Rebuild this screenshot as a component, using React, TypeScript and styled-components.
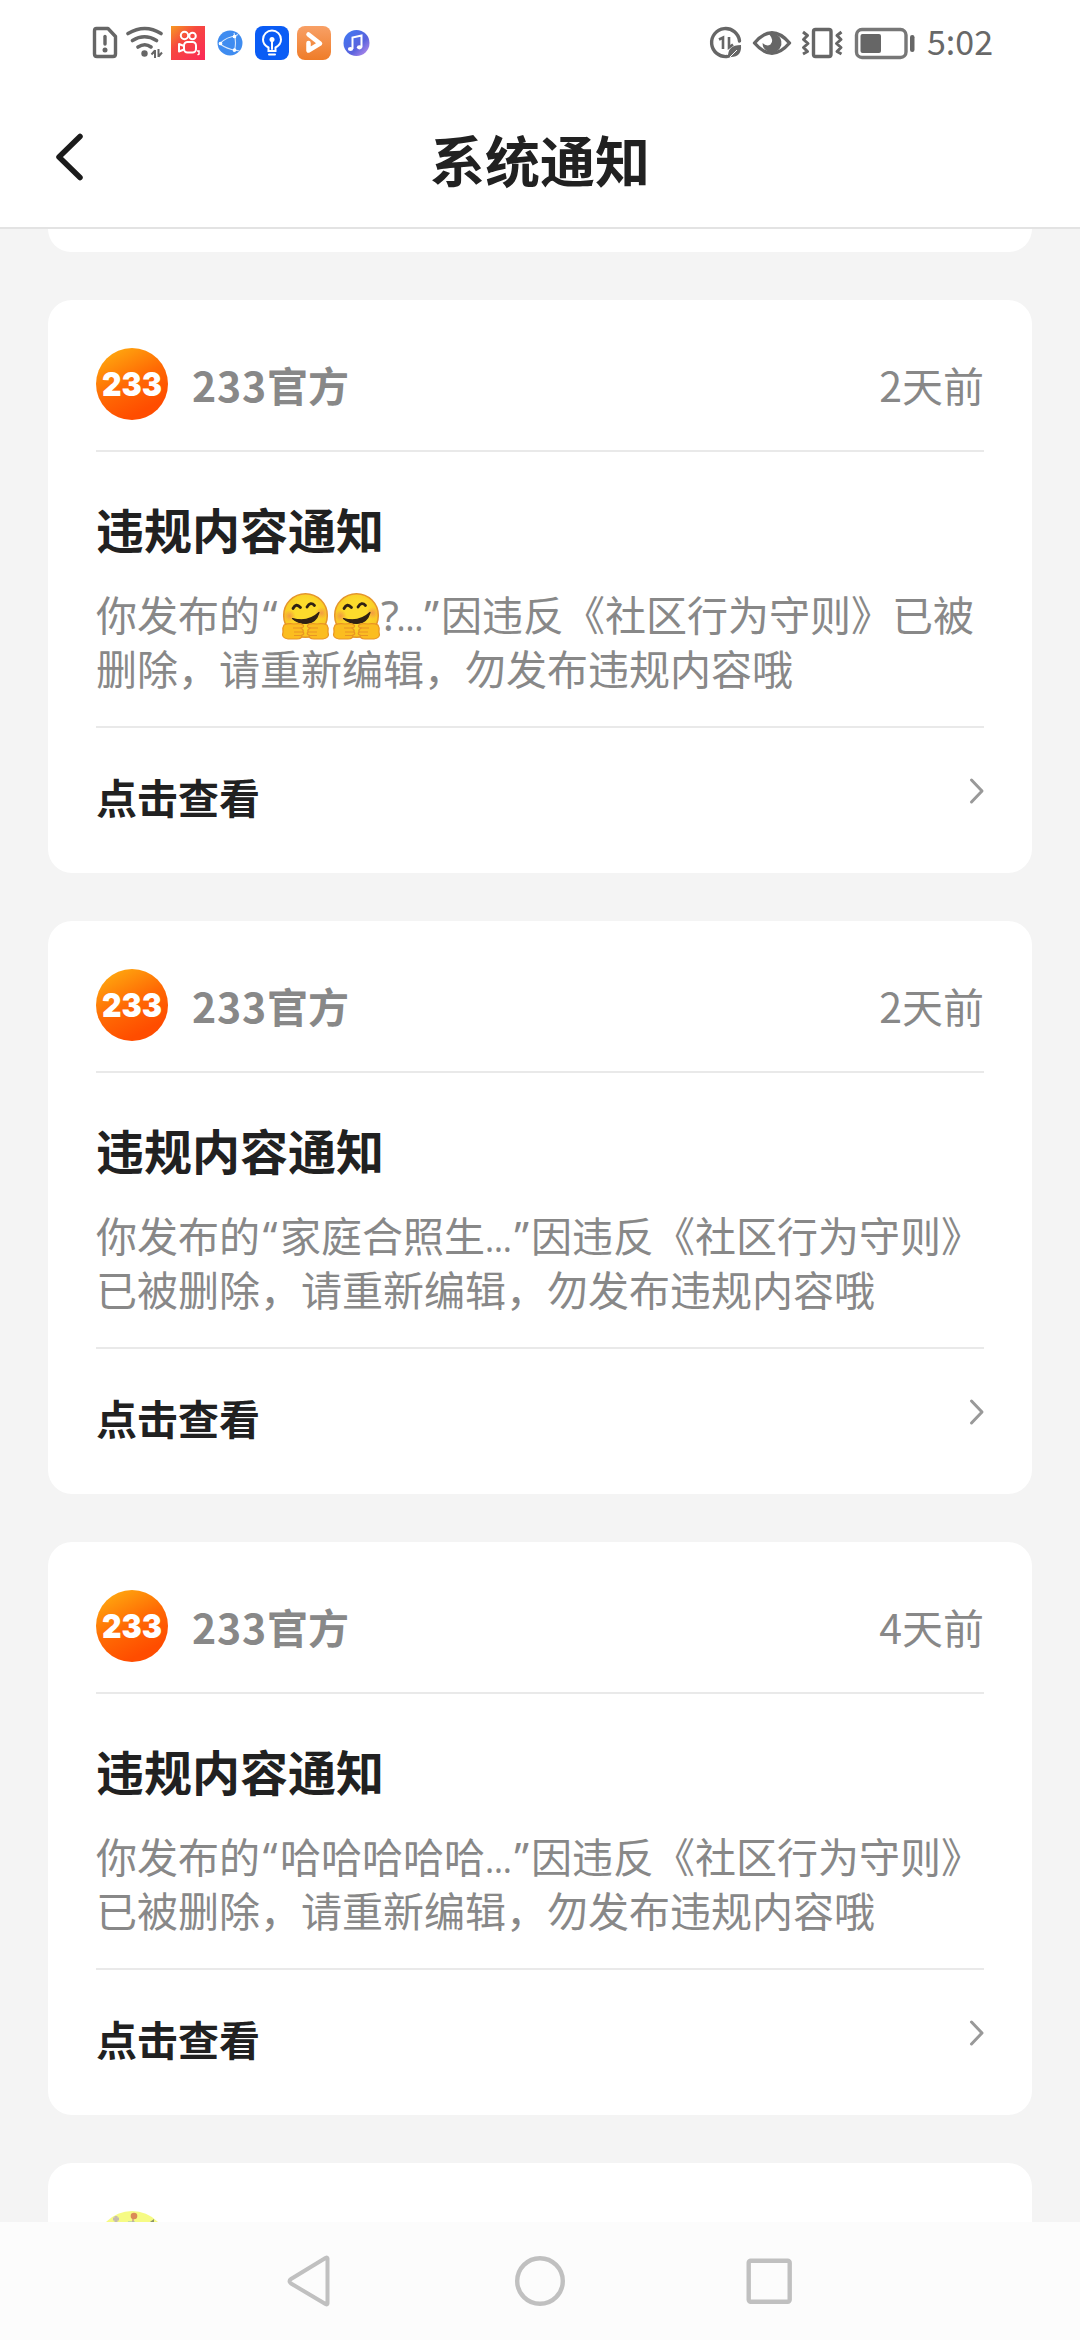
import React from 'react';
import styled, { createGlobalStyle } from 'styled-components';

const GlobalStyle = createGlobalStyle`
  * { box-sizing: border-box; }
  body { margin: 0; background: #f4f4f4; }
`;

const Screen = styled.div`
  width: 1080px;
  height: 2340px;
  display: flex;
  flex-direction: column;
  overflow: hidden;
  background: #f4f4f4;
  color: #212121;
  font-family: 'Noto Sans CJK SC', 'Noto Sans', sans-serif;
`;

const StatusBar = styled.div`
  height: 86px;
  flex: none;
  padding: 0 88px 0 92px;
  display: flex;
  align-items: center;
  justify-content: space-between;
  background: #fff;
`;

const StatusArt = styled.svg`
  display: block;
  flex: none;
`;

const StatusRight = styled.div`
  display: flex;
  align-items: center;
`;

const Clock = styled.span`
  width: 65px;
  margin: 0 0 4px 12px;
  font-size: 34px;
  line-height: 50px;
  color: #686868;
  white-space: nowrap;
`;

const Header = styled.header`
  height: 143px;
  flex: none;
  display: grid;
  grid-template-columns: 200px 1fr 200px;
  align-items: center;
  border-bottom: 2px solid #e3e3e3;
  background: #fff;
`;

const BackButton = styled.button`
  width: 60px;
  height: 60px;
  margin: 0 0 0 40px;
  padding: 0;
  border: 0;
  background: none;
`;

const HeaderTitle = styled.h1`
  margin: 2px 0 0;
  text-align: center;
  font-size: 55px;
  line-height: 70px;
  font-weight: 700;
`;

const Feed = styled.main`
  flex: 1;
  min-height: 0;
  overflow: hidden;
  padding: 0 48px;
  display: flex;
  flex-direction: column;
  gap: 48px;
`;

const PreviousCard = styled.div`
  flex: none;
  height: 23px;
  border-radius: 0 0 24px 24px;
  background: #fff;
`;

const Card = styled.article`
  flex: none;
  height: 573px;
  padding: 0 48px;
  border-radius: 24px;
  background: #fff;
`;

const CardHead = styled.div`
  height: 152px;
  padding-top: 48px;
  display: flex;
  align-items: flex-start;
  border-bottom: 2px solid #e9e9e9;
`;

const Sender = styled.span`
  margin: 6px 0 0 24px;
  font-size: 41px;
  line-height: 60px;
  font-weight: 700;
  color: #888;
`;

const Digits = styled.span`
  letter-spacing: 0.8px;
`;

const Time = styled.time`
  margin: 6px 0 0 auto;
  font-size: 41px;
  line-height: 60px;
  color: #888;
`;

const CardBody = styled.div`
  height: 276px;
  padding-top: 41px;
  border-bottom: 2px solid #e9e9e9;
`;

const CardTitle = styled.h2`
  margin: 0;
  font-size: 48px;
  line-height: 70px;
  font-weight: 700;
`;

const Message = styled.p`
  margin: 23px 0 0;
  font-size: 41px;
  line-height: 55px;
  color: #888;
`;

const Line = styled.span`
  height: 54px;
  display: flex;
  align-items: baseline;
  white-space: nowrap;
`;

const Mark = styled.span<{ $width: number; $size?: number }>`
  width: ${(p) => p.$width}px;
  flex: none;
  display: flex;
  justify-content: center;
  font-family: 'Noto Sans', sans-serif;
  font-size: ${(p) => p.$size ?? 41}px;
`;

const CardFoot = styled.div`
  padding-top: 38px;
  display: flex;
  justify-content: space-between;
  align-items: flex-start;
`;

const FootLabel = styled.span`
  font-size: 41px;
  line-height: 60px;
  font-weight: 700;
`;

const FootArrow = styled.svg`
  margin: 10px -2px 0 0;
`;

const EmojiArt = styled.svg`
  flex: none;
  align-self: flex-start;
  width: 51px;
  height: 55px;
  margin-top: 3px;
`;

const LogoText = styled.text`
  font-family: Inter, sans-serif;
  font-size: 33px;
  font-weight: 900;
  fill: #fff;
`;

const NavBar = styled.nav`
  height: 118px;
  flex: none;
  display: flex;
  justify-content: center;
  align-items: center;
  gap: 170px;
  background: #fcfcfc;
`;

const Avatar = ({ id }: { id: string }) => (
  <svg width="72" height="72" viewBox="0 0 72 72">
    <defs>
      <linearGradient id={id} x1="0.15" y1="0.05" x2="0.6" y2="0.9">
        <stop offset="0" stopColor="#ffa80f" />
        <stop offset="0.55" stopColor="#ff6a04" />
        <stop offset="1" stopColor="#ff4d00" />
      </linearGradient>
    </defs>
    <circle cx="36" cy="36" r="36" fill={`url(#${id})`} />
    <LogoText x="6" y="48" textLength="60" lengthAdjust="spacingAndGlyphs">233</LogoText>
  </svg>
);

const PartyAvatar = () => (
  <svg width="72" height="72" viewBox="0 0 72 72">
    <circle cx="36" cy="36" r="36" fill="#f6fb84" />
    <path d="M37 5v7" stroke="#d9b08a" strokeWidth="2" />
    <circle cx="38" cy="5" r="3.300" fill="#db8a58" />
    <path d="M17 8h6M20 5v6" stroke="#c6bbae" strokeWidth="3" />
    <path d="M32 11.500h7" stroke="#9dc3b4" strokeWidth="2" />
    <path d="M54 11l4-3v4z" fill="#8b9566" />
  </svg>
);

const Hug = () => (
  <EmojiArt viewBox="0 0 51 55" role="img" aria-label="🤗">
    <defs>
      <radialGradient id="hugFace" cx="0.5" cy="0.4" r="0.6">
        <stop offset="0.4" stopColor="#fddb2c" />
        <stop offset="1" stopColor="#f8c321" />
      </radialGradient>
      <radialGradient id="hugCheek">
        <stop offset="0" stopColor="#f08a4b" stopOpacity="0.75" />
        <stop offset="1" stopColor="#f08a4b" stopOpacity="0" />
      </radialGradient>
    </defs>
    <circle cx="25.500" cy="26.500" r="21.800" fill="url(#hugFace)" stroke="#e5962c" strokeWidth="1.500" />
    <circle cx="9.500" cy="27" r="6" fill="url(#hugCheek)" />
    <circle cx="41.500" cy="24" r="6" fill="url(#hugCheek)" />
    <path d="M13 19.500q3-6 7.500-1M27 18q3.500-6 7.500-1.500" fill="none" stroke="#302114" strokeWidth="2.800" strokeLinecap="round" />
    <path d="M12.500 29.500Q28 34 39 23.500 36 34 26 34.500 18 34.500 12.500 29.500Z" fill="#302114" stroke="#302114" strokeWidth="1.200" strokeLinejoin="round" />
    <path d="M4 36q4-2 10-1 7-1 9 1 2 2-2 3 3 2 2 4 2 2-1 3 0 4-5 4H8Q1 49 3 43q-1-4 1-7Z" fill="#fbbd20" stroke="#e99424" strokeWidth="1.200" />
    <path d="M47 36q-4-2-10-1-7-1-9 1-2 2 2 3-3 2-2 4-2 2 1 3 0 4 5 4h9q7-1 5-7 1-4-1-7Z" fill="#fbbd20" stroke="#e99424" strokeWidth="1.200" />
    <path d="M13 39h9M14 43h9M14 46.500h8M38 39h-9M37 43h-9M37 46.500h-8" stroke="#e99424" strokeWidth="1.100" />
  </EmojiArt>
);

const StatusLeftIcons = () => (
  <StatusArt width="280" height="40" viewBox="92 23 280 40">
    <defs>
      <linearGradient id="cam" x1="0" y1="0" x2="0.9" y2="1">
        <stop offset="0" stopColor="#f79a22" />
        <stop offset="0.4" stopColor="#f6493f" />
        <stop offset="1" stopColor="#fb2a57" />
      </linearGradient>
      <linearGradient id="vid" x1="0" y1="0" x2="0" y2="1">
        <stop offset="0" stopColor="#f8a066" />
        <stop offset="1" stopColor="#ef7c28" />
      </linearGradient>
      <linearGradient id="mus" x1="0" y1="0" x2="1" y2="1">
        <stop offset="0" stopColor="#3d7af5" />
        <stop offset="0.6" stopColor="#5a63dd" />
        <stop offset="1" stopColor="#c993ef" />
      </linearGradient>
    </defs>
    <g fill="none" stroke="#666" strokeWidth="3.400" strokeLinejoin="round" strokeLinecap="round">
      <path d="M96.500 28.500H108l7.500 8V54q0 2.500-2.500 2.500H97Q94.500 56.500 94.500 54V31q0-2.500 2-2.500Z" />
      <path d="M105 36.500v7.500" />
      <path d="M128 33.500q17-10 33 0M132.500 40.500q12-7.500 24 0M138 47q7-4.500 13 0" strokeWidth="3.600" />
    </g>
    <circle cx="105" cy="50" r="2.500" fill="#666" />
    <circle cx="144.500" cy="53.500" r="3.200" fill="#666" />
    <path d="M155 50v8M151.500 54.500l3.500-4M158.500 49v8M162 52.500l-3.500 4" stroke="#666" strokeWidth="2" fill="none" />
    <rect x="171" y="26" width="34" height="34" fill="url(#cam)" />
    <g fill="none" stroke="#fff" strokeWidth="2">
      <circle cx="184.500" cy="35.500" r="3.700" />
      <circle cx="192.500" cy="36" r="3.300" />
      <rect x="184" y="42" width="12" height="10.500" rx="3.500" />
      <path d="M184 46l-5-2v7.500l5-2" strokeLinejoin="round" />
    </g>
    <path d="M197 51h2v3l-1.500 1" stroke="#fff" strokeWidth="1.500" fill="none" />
    <circle cx="230" cy="43" r="12.500" fill="#3f8cf0" />
    <g stroke="#fff" strokeWidth="1.100" fill="#fff">
      <path d="M220 43.500Q227 36.500 236 36M220 44Q227 49 236 50.500M234 33Q237 43 234 52M234 36.500l4-2M234.500 50l5 1" fill="none" strokeOpacity="0.8" />
      <circle cx="220.500" cy="43.500" r="1.300" />
      <circle cx="234.500" cy="36.500" r="1.300" />
      <circle cx="234.500" cy="50" r="1.300" />
    </g>
    <rect x="255" y="26" width="34" height="34" rx="8" fill="#0a5cf5" />
    <g fill="none" stroke="#fff" strokeWidth="2" strokeLinecap="round">
      <path d="M268.500 51v-3.500q-5.500-3-5.500-8a9 9 0 0 1 18 0q0 5-5.500 8V51Z" />
      <path d="M272 49v-8M269 54.500h6" strokeWidth="2" />
    </g>
    <circle cx="272" cy="39.500" r="2.500" fill="#fff" />
    <rect x="297" y="26" width="34" height="34" rx="8" fill="url(#vid)" />
    <path d="M308.500 34.500L320 43.500L308.500 50.500V43" fill="none" stroke="#fff" strokeWidth="4.500" strokeLinecap="round" strokeLinejoin="round" />
    <circle cx="356.500" cy="43" r="13" fill="url(#mus)" />
    <path d="M352.500 49V37.500l9-2V47" fill="none" stroke="#fff" strokeWidth="2" />
    <ellipse cx="350.500" cy="49" rx="2.600" ry="2.100" fill="#fff" />
    <ellipse cx="359.500" cy="47.300" rx="2.600" ry="2.100" fill="#fff" />
  </StatusArt>
);

const StatusRightIcons = () => (
  <StatusArt width="207" height="40" viewBox="707 22 207 40">
    <g fill="none" stroke="#666" strokeWidth="3.400">
      <path d="M726 55.500A14 14 0 1 1 738.500 40" strokeLinecap="round" />
      <path d="M718 38.500l4-2V48M728 36v10.500l4-3" strokeWidth="2.600" />
      <path d="M753.500 42Q771 21.500 788.500 42 771 62.500 753.500 42Z" strokeLinejoin="round" />
      <rect x="812.500" y="28.500" width="17.500" height="27" rx="2" />
      <path d="M802 31l4.500 3.500-4 4 4.500 4-4.500 4 4 4-4.500 2.500M840.500 31l-4.500 3.500 4 4-4.500 4 4.500 4-4 4 4.500 2.500" strokeWidth="3" strokeLinejoin="round" />
      <rect x="855.500" y="28.500" width="49.500" height="28" rx="5.500" stroke="#777" />
    </g>
    <path d="M727 57q-1-13 13-13 1 12-10 12Z" fill="#666" />
    <path d="M729 56l7-7" stroke="#fff" strokeWidth="1" />
    <path d="M768 33a9.500 9.500 0 1 1-6.500 9q4 4 8 1.500 4-4-1.500-10.500Z" fill="#666" />
    <rect x="859.500" y="33" width="20.500" height="19" rx="2" fill="#666" />
    <rect x="909" y="34" width="4.500" height="17" rx="2.200" fill="#666" />
  </StatusArt>
);

type Notice = { time: string; quote: string | null; head: string; second: string };

const notices: Notice[] = [
  { time: '2天前', quote: null, head: '因违反《社区行为守则》已被', second: '删除，请重新编辑，勿发布违规内容哦' },
  { time: '2天前', quote: '家庭合照生', head: '因违反《社区行为守则》', second: '已被删除，请重新编辑，勿发布违规内容哦' },
  { time: '4天前', quote: '哈哈哈哈哈', head: '因违反《社区行为守则》', second: '已被删除，请重新编辑，勿发布违规内容哦' },
];

const NoticeCard = ({ notice, index }: { notice: Notice; index: number }) => (
  <Card>
    <CardHead>
      <Avatar id={`avatar${index}`} />
      <Sender><Digits>233</Digits>官方</Sender>
      <Time>{notice.time}</Time>
    </CardHead>
    <CardBody>
      <CardTitle>违规内容通知</CardTitle>
      <Message>
        <Line>
          <span>你发布的</span>
          <Mark $width={20}>“</Mark>
          {notice.quote ? <span>{notice.quote}</span> : <><Hug /><Hug /><Mark $width={16}>?</Mark></>}
          <Mark $width={notice.quote ? 27 : 24} $size={34}>…</Mark>
          <Mark $width={19}>”</Mark>
          <span>{notice.head}</span>
        </Line>
        <Line>{notice.second}</Line>
      </Message>
    </CardBody>
    <CardFoot>
      <FootLabel>点击查看</FootLabel>
      <FootArrow width="18" height="30" viewBox="0 0 18 30">
        <path d="M3.500 4L14 15 3.500 26" fill="none" stroke="#999" strokeWidth="3" strokeLinecap="round" strokeLinejoin="round" />
      </FootArrow>
    </CardFoot>
  </Card>
);

export default function App() {
  return (
    <Screen>
      <GlobalStyle />
      <StatusBar>
        <StatusLeftIcons />
        <StatusRight>
          <StatusRightIcons />
          <Clock>5:02</Clock>
        </StatusRight>
      </StatusBar>
      <Header>
        <BackButton aria-label="返回">
          <svg width="60" height="60" viewBox="0 0 60 60">
            <path d="M40 9.500L19 30l21 20.500" fill="none" stroke="#1b1b1b" strokeWidth="5.500" strokeLinecap="round" strokeLinejoin="round" />
          </svg>
        </BackButton>
        <HeaderTitle>系统通知</HeaderTitle>
      </Header>
      <Feed>
        <PreviousCard />
        {notices.map((notice, i) => <NoticeCard key={i} notice={notice} index={i} />)}
        <Card>
          <CardHead><PartyAvatar /></CardHead>
        </Card>
      </Feed>
      <NavBar>
        <svg width="60" height="60" viewBox="0 0 60 60">
          <path d="M47.500 7.500V52.500Q47.500 54 45.500 53L11 32.500Q8 30 11 28L45.500 7Q47.500 6 47.500 7.500Z" fill="none" stroke="#c0c0c0" strokeWidth="4" strokeLinejoin="round" />
        </svg>
        <svg width="60" height="60" viewBox="0 0 60 60">
          <circle cx="30" cy="30" r="22.800" fill="none" stroke="#c0c0c0" strokeWidth="4.400" />
        </svg>
        <svg width="60" height="60" viewBox="0 0 60 60">
          <rect x="8.700" y="9.700" width="41" height="41" rx="2" fill="none" stroke="#c0c0c0" strokeWidth="4.400" />
        </svg>
      </NavBar>
    </Screen>
  );
}
